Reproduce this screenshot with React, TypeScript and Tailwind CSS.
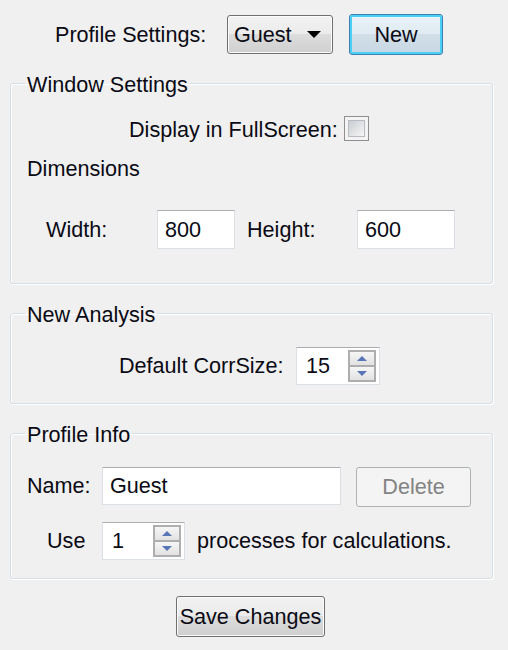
import React from "react";

const font = { fontFamily: '"Liberation Sans", Arial, sans-serif' };

function Spin({ value, width, pl }: { value: string; width: string; pl: string }) {
  return (
    <div
      className={`flex h-[38px] ${width} items-stretch border border-[#dbdfe6] border-t-[#abadb3] bg-white py-[2px] pr-[3px]`}
    >
      <div className={`flex flex-1 items-center ${pl}`}>{value}</div>
      <div className="flex w-[28px] flex-col border-2 border-[#aeaeae]">
        <div className="flex flex-1 items-center justify-center border-b border-[#aeaeae] bg-gradient-to-b from-[#f6f6f6] to-[#e2e2e2]">
          <div className="h-0 w-0 border-x-[5px] border-b-[5px] border-x-transparent border-b-[#5a74b8]" />
        </div>
        <div className="flex flex-1 items-center justify-center border-t border-[#aeaeae] bg-gradient-to-b from-[#f6f6f6] to-[#e2e2e2]">
          <div className="h-0 w-0 border-x-[5px] border-t-[5px] border-x-transparent border-t-[#5a74b8]" />
        </div>
      </div>
    </div>
  );
}

function Group({ title, children, className }: { title: string; children: React.ReactNode; className: string }) {
  return (
    <fieldset
      className={`ml-[10px] w-[483px] rounded-[3px] border border-[#d5dfe5] shadow-[inset_1px_1px_0_#ffffff,1px_1px_0_#ffffff] ${className}`}
    >
      <legend className="ml-[14px] px-[2px] pt-[4px] leading-[20px]">{title}</legend>
      {children}
    </fieldset>
  );
}

export default function App() {
  return (
    <div
      className="h-[650px] w-[508px] overflow-hidden bg-[#f0f0f0] text-[21.6px] leading-[24px] text-[#0a0a14]"
      style={font}
    >
      {/* top row */}
      <div className="flex items-center pl-[55px] pt-[14px]">
        <span className="w-[172px]">Profile Settings:</span>
        <div className="flex h-[39px] w-[106px] items-center justify-between rounded-[3px] border border-[#707070] bg-[linear-gradient(#f2f2f2,#ebebeb_50%,#dddddd_50%,#cfcfcf)] pl-[6px] pr-[11px] shadow-[inset_0_0_0_1px_#fbfbfb]">
          <span>Guest</span>
          <div className="h-0 w-0 border-x-[7px] border-t-[7px] border-x-transparent border-t-black" />
        </div>
        <div className="ml-[16px] flex h-[41px] w-[94px] items-center justify-center rounded-[3px] border border-[#3c7fb1] bg-[linear-gradient(#eaf3f9,#dfeaf2_50%,#d2dfe9_50%,#c6d6e2)] shadow-[inset_0_0_0_2px_#4ccff5]">
          New
        </div>
      </div>

      {/* Window Settings */}
      <Group title="Window Settings" className="mt-[16px] pb-[34px]">
        <div className="mt-[21px] flex h-[25px] items-center pl-[118px]">
          <span className="w-[215px] pt-[2px]">Display in FullScreen:</span>
          <div className="flex h-[25px] w-[25px] items-center justify-center border border-[#8f8f8f] bg-[#f4f4f4]">
            <div className="h-[17px] w-[17px] border border-[#b8bcc2] bg-gradient-to-br from-[#c9ccd1] to-[#f7f7f7]" />
          </div>
        </div>
        <div className="mt-[16px] pl-[16px]">Dimensions</div>
        <div className="mt-[29px] flex items-center pl-[35px]">
          <span className="w-[111px]">Width:</span>
          <div className="flex h-[39px] w-[78px] items-center border border-[#dbdfe6] border-t-[#abadb3] bg-white pl-[7px]">
            800
          </div>
          <span className="ml-[12px] w-[110px]">Height:</span>
          <div className="flex h-[39px] w-[98px] items-center border border-[#dbdfe6] border-t-[#abadb3] bg-white pl-[7px]">
            600
          </div>
        </div>
      </Group>

      {/* New Analysis */}
      <Group title="New Analysis" className="mt-[17px] pb-[18px]">
        <div className="mt-[22px] flex items-center pl-[108px]">
          <span className="w-[177px]">Default CorrSize:</span>
          <Spin value="15" width="w-[84px]" pl="pl-[9px]" />
        </div>
      </Group>

      {/* Profile Info */}
      <Group title="Profile Info" className="mt-[17px] pb-[18px]">
        <div className="mt-[22px] flex items-start pl-[16px]">
          <span className="flex h-[38px] w-[75px] items-center">Name:</span>
          <div className="flex h-[38px] w-[239px] items-center border border-[#dbdfe6] border-t-[#abadb3] bg-white pl-[7px]">
            Guest
          </div>
          <div className="ml-[15px] flex h-[40px] w-[115px] items-center justify-center rounded-[3px] border border-[#adb2b5] bg-[#f4f4f4] text-[#838383]">
            Delete
          </div>
        </div>
        <div className="mt-[15px] flex items-center pl-[36px]">
          <span className="w-[55px]">Use</span>
          <Spin value="1" width="w-[83px]" pl="pl-[9px]" />
          <span className="ml-[12px]">processes for calculations.</span>
        </div>
      </Group>

      <div className="ml-[176px] mt-[17px] flex h-[41px] w-[149px] items-center justify-center rounded-[3px] border border-[#707070] bg-[linear-gradient(#f2f2f2,#ebebeb_50%,#dddddd_50%,#cfcfcf)] shadow-[inset_0_0_0_1px_#fbfbfb]">
        Save Changes
      </div>
    </div>
  );
}
